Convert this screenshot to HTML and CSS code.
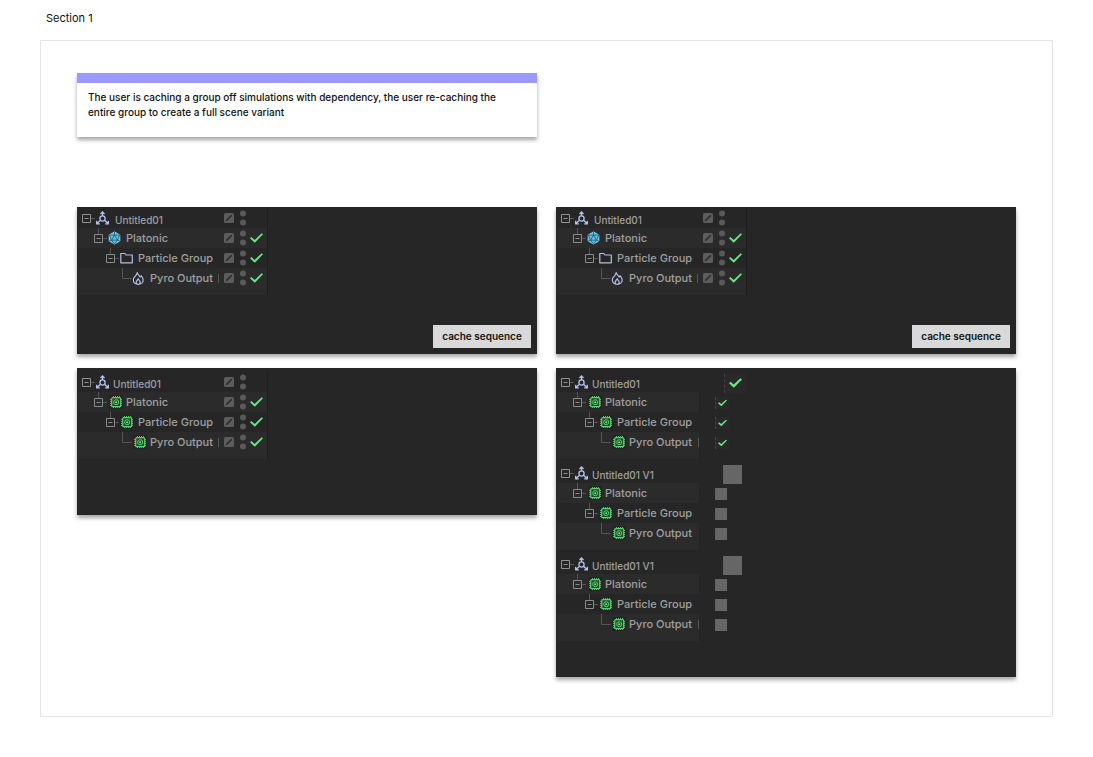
FILE: index.html
```html
<!DOCTYPE html>
<html lang="en">
<head>
<meta charset="utf-8">
<meta name="viewport" content="width=device-width, initial-scale=1">
<title>Section 1</title>
<link rel="stylesheet" href="styles.css">
</head>
<body>
<svg class="sprite" aria-hidden="true">
  <symbol id="branch-root" viewBox="0 0 14 20"><path d="M.5 6.5h8v8h-8zM2.5 10.5h4" stroke="#929292"/><path d="M9 10.5h4" stroke="#5a5a5a"/></symbol>
  <symbol id="branch" viewBox="0 0 14 20"><path d="M.5 6.5h8v8h-8zM2.5 10.5h4" stroke="#8a8a8a"/><path d="M4.5 0v6M9 10.5h4" stroke="#555"/></symbol>
  <symbol id="leaf" viewBox="0 0 14 20"><path d="M4.5 0v10.500h9" stroke="#555"/></symbol>
  <symbol id="null" viewBox="0 0 14 14"><g stroke="#b4c2ee" stroke-width="1.300"><circle cx="6.500" cy="7.500" r="2.600"/><path d="M6.500 5V1.200M4.500 9.300L1 12.500M8.500 9.300l3.500 3.200M4.500 3L6.500 1l2 2M.7 9.700v3.100h3.100M12.300 9.700v3.100H9.200"/></g></symbol>
  <symbol id="platonic" viewBox="0 0 14 14"><path d="M6.500 1l5.300 3v6l-5.300 3-5.300-3V4z" fill="#62bfe4" stroke="#8ad9f5"/><path d="M6.500 4.200l3 5h-6zM6.500 1v3.200M1.200 4l2.300 5.200 3 3.800 3-3.800L11.800 4l-5.300.2zM1.200 10l2.300-.8M11.800 10l-2.300-.8" stroke="#20566d" stroke-width=".8"/></symbol>
  <symbol id="folder" viewBox="0 0 14 14"><path d="M.8 2.500h4L6 4h6.300v7.800H.8z" stroke="#b4bfe6" stroke-width="1.200" stroke-linejoin="round"/></symbol>
  <symbol id="pyro" viewBox="0 0 14 14"><path d="M5.200 1.700c.3 2 2.300 2.600 2.800 4.300l1.300-1.200c.5 1.300 1.900 2.500 1.900 4.200 0 2.500-2.200 4.300-5 4.300s-4.900-1.800-4.900-4.300c0-2 1-2.700 2-3.800 1-1.200 1.700-2 1.900-3.500zM6.200 7.700c.2 1.200 2 1.800 2 3.500 0 1.300-.8 2.100-2 2.100s-2-.9-2-2.100c0-1.500 1.600-2.200 2-3.500z" stroke="#b4bfe6" stroke-width="1.200" stroke-linejoin="round"/></symbol>
  <symbol id="chip" viewBox="0 0 14 14"><rect width="14" height="14" fill="#222523"/><path d="M4.500 1v12M6.500 1v12M8.500 1v12M10.500 1v12M1 4.500h12M1 6.500h12M1 8.500h12M1 10.500h12" stroke="#4fb864"/><rect x="2.700" y="2.700" width="9" height="9" rx="1" fill="#234a2b" stroke="#5ad170" stroke-width="1.200"/><circle cx="7.200" cy="7.200" r="2.500" stroke="#5ad170"/><circle cx="7.200" cy="7.200" r="1" fill="#6df080"/></symbol>
  <symbol id="layer" viewBox="0 0 10 10"><rect width="10" height="10" rx="1.500" fill="#5c5c5c"/><path d="M2.300 7.700l5.400-5.400" stroke="#262626" stroke-width="1.400"/></symbol>
  <symbol id="dots" viewBox="0 0 6 16"><circle cx="3" cy="3.500" r="3" fill="#5a5a5a"/><circle cx="3" cy="12.500" r="3" fill="#5a5a5a"/></symbol>
</svg>

<h1 class="section-title">Section 1</h1>
<main class="board">
  <p class="note">The user is caching a group off simulations with dependency, the user re-caching the entire group to create a full scene variant</p>

  <section class="panel panel-source">
    <div class="tree tree-full">
      <div class="row root loose"><button class="branch" aria-label="Collapse Untitled01"><svg><use href="#branch-root"/></svg></button><svg class="icon"><use href="#null"/></svg><span class="name">Untitled01</span><svg class="layer"><use href="#layer"/></svg><svg class="dots"><use href="#dots"/></svg></div>
      <div class="row level-1"><button class="branch" aria-label="Collapse Platonic"><svg><use href="#branch"/></svg></button><svg class="icon"><use href="#platonic"/></svg><span class="name">Platonic</span><svg class="layer"><use href="#layer"/></svg><svg class="dots"><use href="#dots"/></svg><input class="tick" type="checkbox" checked aria-label="Platonic enabled"></div>
      <div class="row level-2"><button class="branch" aria-label="Collapse Particle Group"><svg><use href="#branch"/></svg></button><svg class="icon"><use href="#folder"/></svg><span class="name">Particle Group</span><svg class="layer"><use href="#layer"/></svg><svg class="dots"><use href="#dots"/></svg><input class="tick" type="checkbox" checked aria-label="Particle Group enabled"></div>
      <div class="row level-3"><svg class="branch"><use href="#leaf"/></svg><svg class="icon"><use href="#pyro"/></svg><span class="name cut">Pyro Output</span><svg class="layer"><use href="#layer"/></svg><svg class="dots"><use href="#dots"/></svg><input class="tick" type="checkbox" checked aria-label="Pyro Output enabled"></div>
    </div>
    <button class="cache">cache sequence</button>
  </section>

  <section class="panel panel-source">
    <div class="tree tree-full">
      <div class="row root loose"><button class="branch" aria-label="Collapse Untitled01"><svg><use href="#branch-root"/></svg></button><svg class="icon"><use href="#null"/></svg><span class="name">Untitled01</span><svg class="layer"><use href="#layer"/></svg><svg class="dots"><use href="#dots"/></svg></div>
      <div class="row level-1"><button class="branch" aria-label="Collapse Platonic"><svg><use href="#branch"/></svg></button><svg class="icon"><use href="#platonic"/></svg><span class="name">Platonic</span><svg class="layer"><use href="#layer"/></svg><svg class="dots"><use href="#dots"/></svg><input class="tick" type="checkbox" checked aria-label="Platonic enabled"></div>
      <div class="row level-2"><button class="branch" aria-label="Collapse Particle Group"><svg><use href="#branch"/></svg></button><svg class="icon"><use href="#folder"/></svg><span class="name">Particle Group</span><svg class="layer"><use href="#layer"/></svg><svg class="dots"><use href="#dots"/></svg><input class="tick" type="checkbox" checked aria-label="Particle Group enabled"></div>
      <div class="row level-3"><svg class="branch"><use href="#leaf"/></svg><svg class="icon"><use href="#pyro"/></svg><span class="name cut">Pyro Output</span><svg class="layer"><use href="#layer"/></svg><svg class="dots"><use href="#dots"/></svg><input class="tick" type="checkbox" checked aria-label="Pyro Output enabled"></div>
    </div>
    <button class="cache">cache sequence</button>
  </section>

  <section class="panel panel-cached">
    <div class="tree tree-full">
      <div class="row root"><button class="branch" aria-label="Collapse Untitled01"><svg><use href="#branch-root"/></svg></button><svg class="icon"><use href="#null"/></svg><span class="name">Untitled01</span><svg class="layer"><use href="#layer"/></svg><svg class="dots"><use href="#dots"/></svg></div>
      <div class="row level-1"><button class="branch" aria-label="Collapse Platonic"><svg><use href="#branch"/></svg></button><svg class="icon chip"><use href="#chip"/></svg><span class="name">Platonic</span><svg class="layer"><use href="#layer"/></svg><svg class="dots"><use href="#dots"/></svg><input class="tick" type="checkbox" checked aria-label="Platonic enabled"></div>
      <div class="row level-2"><button class="branch" aria-label="Collapse Particle Group"><svg><use href="#branch"/></svg></button><svg class="icon"><use href="#chip"/></svg><span class="name">Particle Group</span><svg class="layer"><use href="#layer"/></svg><svg class="dots"><use href="#dots"/></svg><input class="tick" type="checkbox" checked aria-label="Particle Group enabled"></div>
      <div class="row level-3"><svg class="branch"><use href="#leaf"/></svg><svg class="icon chip"><use href="#chip"/></svg><span class="name cut">Pyro Output</span><svg class="layer"><use href="#layer"/></svg><svg class="dots"><use href="#dots"/></svg><input class="tick" type="checkbox" checked aria-label="Pyro Output enabled"></div>
    </div>
  </section>

  <section class="panel panel-cached panel-variants">
    <div class="variant">
      <div class="tree">
        <div class="row root"><button class="branch" aria-label="Collapse Untitled01"><svg><use href="#branch-root"/></svg></button><svg class="icon"><use href="#null"/></svg><span class="name">Untitled01</span></div>
        <div class="row level-1"><button class="branch" aria-label="Collapse Platonic"><svg><use href="#branch"/></svg></button><svg class="icon chip"><use href="#chip"/></svg><span class="name">Platonic</span></div>
        <div class="row level-2"><button class="branch" aria-label="Collapse Particle Group"><svg><use href="#branch"/></svg></button><svg class="icon"><use href="#chip"/></svg><span class="name">Particle Group</span></div>
        <div class="row level-3"><svg class="branch"><use href="#leaf"/></svg><svg class="icon chip"><use href="#chip"/></svg><span class="name cut">Pyro Output</span></div>
      </div>
      <div class="picks">
        <input class="pick large" type="checkbox" checked aria-label="Use Untitled01">
        <input class="pick" type="checkbox" checked aria-label="Use Platonic">
        <input class="pick" type="checkbox" checked aria-label="Use Particle Group">
        <input class="pick" type="checkbox" checked aria-label="Use Pyro Output">
      </div>
    </div>
    <div class="variant">
      <div class="tree">
        <div class="row root"><button class="branch" aria-label="Collapse Untitled01 V1"><svg><use href="#branch-root"/></svg></button><svg class="icon"><use href="#null"/></svg><span class="name">Untitled01 V1</span></div>
        <div class="row level-1"><button class="branch" aria-label="Collapse Platonic"><svg><use href="#branch"/></svg></button><svg class="icon chip"><use href="#chip"/></svg><span class="name">Platonic</span></div>
        <div class="row level-2"><button class="branch" aria-label="Collapse Particle Group"><svg><use href="#branch"/></svg></button><svg class="icon"><use href="#chip"/></svg><span class="name">Particle Group</span></div>
        <div class="row level-3"><svg class="branch"><use href="#leaf"/></svg><svg class="icon chip"><use href="#chip"/></svg><span class="name">Pyro Output</span></div>
      </div>
      <div class="picks">
        <input class="pick large" type="checkbox" aria-label="Use Untitled01 V1">
        <input class="pick" type="checkbox" aria-label="Use Platonic">
        <input class="pick" type="checkbox" aria-label="Use Particle Group">
        <input class="pick" type="checkbox" aria-label="Use Pyro Output">
      </div>
    </div>
    <div class="variant">
      <div class="tree">
        <div class="row root"><button class="branch" aria-label="Collapse Untitled01 V1"><svg><use href="#branch-root"/></svg></button><svg class="icon"><use href="#null"/></svg><span class="name">Untitled01 V1</span></div>
        <div class="row level-1"><button class="branch" aria-label="Collapse Platonic"><svg><use href="#branch"/></svg></button><svg class="icon chip"><use href="#chip"/></svg><span class="name">Platonic</span></div>
        <div class="row level-2"><button class="branch" aria-label="Collapse Particle Group"><svg><use href="#branch"/></svg></button><svg class="icon"><use href="#chip"/></svg><span class="name">Particle Group</span></div>
        <div class="row level-3"><svg class="branch"><use href="#leaf"/></svg><svg class="icon chip"><use href="#chip"/></svg><span class="name cut">Pyro Output</span></div>
      </div>
      <div class="picks">
        <input class="pick large" type="checkbox" aria-label="Use Untitled01 V1">
        <input class="pick" type="checkbox" aria-label="Use Platonic">
        <input class="pick" type="checkbox" aria-label="Use Particle Group">
        <input class="pick" type="checkbox" aria-label="Use Pyro Output">
      </div>
    </div>
  </section>
</main>
</body>
</html>
```
FILE: styles.css
```css
* { box-sizing: border-box; }

body {
  margin: 0;
  padding: 10px 40px 40px;
  background: #fff;
  color: #111;
  font-family: Inter, "Liberation Sans", sans-serif;
  font-size: 11px;
}

svg { display: block; flex: none; fill: none; }
button, input { margin: 0; padding: 0; border: 0; font: inherit; appearance: none; }
.sprite { position: absolute; width: 0; height: 0; }

.section-title {
  margin: 0 0 14px;
  padding-left: 6px;
  font-size: 11px;
  font-weight: 400;
  line-height: 16px;
}

.board {
  display: grid;
  grid-template-columns: 1fr 1fr;
  column-gap: 19px;
  row-gap: 14px;
  align-items: start;
  padding: 32px 36px 39px;
  border: 1px solid #e5e5e5;
}

.note {
  grid-column: 1;
  margin: 0 0 56px;
  padding: 7px 30px 17px 11px;
  border-top: 10px solid #9999ff;
  background: #fff;
  box-shadow: 0 3px 4px rgba(0, 0, 0, .35);
  font-size: 10px;
  font-weight: 500;
  line-height: 15px;
}

.panel {
  display: flex;
  flex-direction: column;
  background: #262626;
  box-shadow: 0 3px 4px rgba(0, 0, 0, .35);
}
.panel:nth-of-type(1), .panel:nth-of-type(2), .panel:nth-of-type(3) { min-height: 147px; }
.panel:nth-of-type(1) { grid-column: 1; }
.panel-source { padding: 1px 6px 6px 1px; }
.panel-cached { padding: 4px 0 36px 1px; }
.panel-variants { gap: 4px; }

.tree { width: 142px; color: #a0a0a0; font-weight: 500; }
.tree-full { width: 190px; border-right: 1px solid #1e1e1e; }

.row {
  display: flex;
  align-items: center;
  height: 20px;
  padding-left: 4px;
}
.row:nth-child(even) { background: #2b2b2b; }
.level-1 { padding-left: 16px; }
.level-2 { padding-left: 28px; }
.level-3 { height: 27px; padding-bottom: 7px; padding-left: 40px; }

.branch { flex: none; width: 14px; height: 20px; background: none; }
.branch svg { width: 14px; height: 20px; }
.icon { width: 14px; height: 14px; margin-right: 4px; }
.root .icon { margin-right: 3px; }
.loose .icon { margin-right: 5px; }
.chip { margin-right: 3px; margin-left: 1px; }

.name {
  flex: 1;
  min-width: 0;
  overflow: hidden;
  line-height: 16px;
  white-space: nowrap;
}
.root .name { padding-top: 3px; font-size: 10px; }
.cut { border-right: 1px solid transparent; border-image: linear-gradient(transparent 30%, #555 30%, #555 75%, transparent 75%) 1; }

.layer { width: 10px; height: 10px; margin-left: 5px; }
.dots { width: 6px; height: 16px; margin: 0 21px 0 6px; }
.tick {
  flex: none;
  width: 13px;
  height: 10px;
  margin-left: -17px;
  margin-right: 4px;
  background: #68ea83;
  clip-path: polygon(0 52%, 10% 40%, 36% 70%, 90% 2%, 100% 12%, 37% 98%);
}

.cache {
  align-self: flex-end;
  width: 98px;
  height: 23px;
  margin-top: 30px;
  padding-bottom: 1px;
  background: #d9d9d9;
  color: #111;
  font-size: 10px;
  font-weight: 600;
}

.variant { display: flex; gap: 14px; }
.picks {
  display: grid;
  grid-template-rows: repeat(4, 20px);
  align-items: center;
  padding-top: 1px;
}
.pick {
  display: grid;
  place-items: center;
  width: 12px;
  height: 12px;
  margin-left: 2px;
  background: #666;
}
.pick.large { width: 19px; height: 19px; margin-left: 10px; }
.pick:checked { width: 14px; border-left: 1px dashed #444; background: #292929; }
.pick.large:checked { width: 22px; margin-left: 11px; }
.pick:checked::before {
  content: "";
  width: 9px;
  height: 7px;
  background: #68ea83;
  clip-path: polygon(0 52%, 12% 38%, 36% 66%, 88% 2%, 100% 14%, 37% 98%);
}
.pick.large:checked::before { width: 13px; height: 10px; }
```
